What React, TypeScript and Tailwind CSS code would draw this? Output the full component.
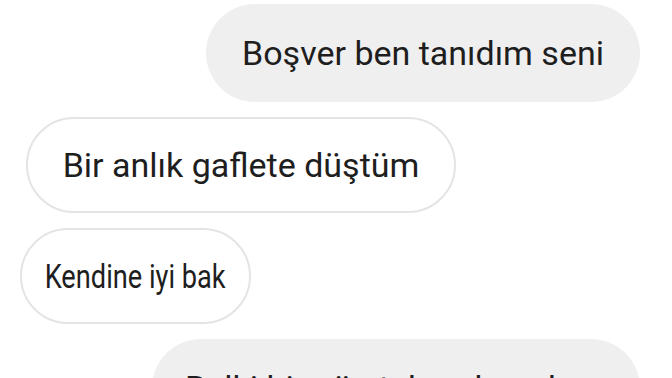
export default function App() {
  return (
    <div
      className="w-[672px] h-[378px] overflow-hidden bg-white flex flex-col gap-[15px] pt-[4px]"
      style={{ fontFamily: "Roboto, 'Noto Sans', sans-serif" }}
    >
      {/* Sent */}
      <div className="flex justify-end pr-[32px]">
        <div className="h-[98px] w-[434px] rounded-full bg-[#efefef] flex items-center justify-center text-[34px] text-[#1e1e1e]">
          Boşver ben tanıdım seni
        </div>
      </div>

      {/* Received */}
      <div className="flex flex-col gap-[15px] pl-[26px]">
        <div className="h-[96px] w-[430px] rounded-full border-2 border-[#e4e4e4] bg-white flex items-center justify-center text-[34px] text-[#1e1e1e]">
          Bir anlık gaflete düştüm
        </div>
        <div className="-ml-[6px] h-[96px] w-[231px] rounded-full border-2 border-[#e4e4e4] bg-white flex items-center justify-center text-[34px] text-[#1e1e1e]">
          <span className="inline-block scale-x-[0.8] whitespace-nowrap">Kendine iyi bak</span>
        </div>
      </div>

      {/* Sent, cut off */}
      <div className="flex justify-end pr-[32px]">
        <div className="h-[98px] w-[488px] rounded-full bg-[#efefef] flex items-center pl-[33px] text-[34px] text-[#1e1e1e] whitespace-nowrap">
          Belki bir gün tekrar karşılaşırız
        </div>
      </div>
    </div>
  );
}
